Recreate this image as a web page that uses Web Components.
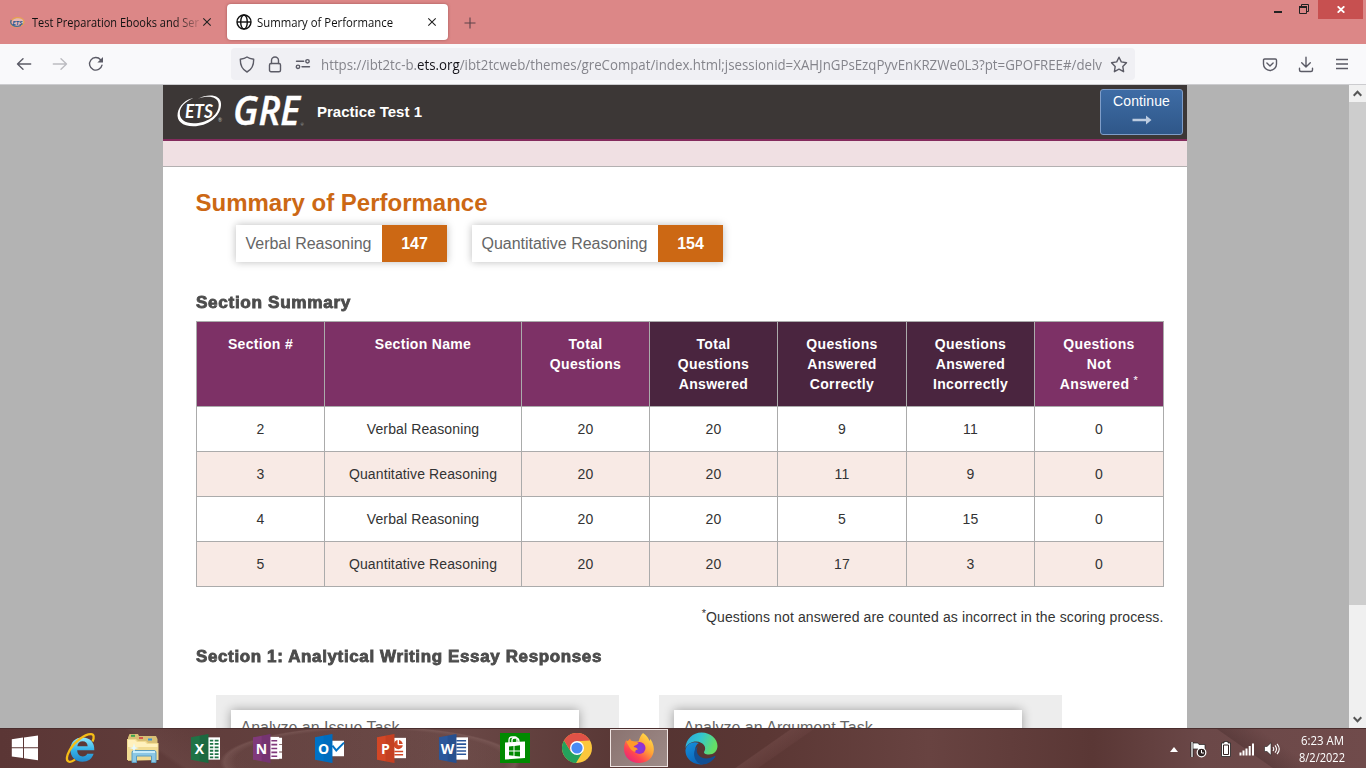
<!DOCTYPE html>
<html lang="en">
<head>
<meta charset="utf-8">
<title>Summary of Performance</title>
<style>
html,body{margin:0;height:100%;overflow:hidden;font-family:"Liberation Sans",Arial,sans-serif}
</style>
</head>
<body>
<desktop-screen></desktop-screen>
<script>
const define=(name,html,setup)=>customElements.define(name,class extends HTMLElement{
  connectedCallback(){
    if(this.shadowRoot)return;
    const t=document.createElement('template');
    t.innerHTML=typeof html==='function'?html(this):html;
    this.attachShadow({mode:'open'}).append(t.content.cloneNode(true));
    if(setup)setup(this,this.shadowRoot);
  }
});

/* Text run set to a given width: mode "space" tracks the letters, otherwise glyphs are scaled. */
define('fit-text','<style>:host{display:inline-block;white-space:nowrap}span{display:inline-block;transform-origin:0 50%}</style><span><slot></slot></span>',(el,r)=>{
  const w=+el.getAttribute('w'),s=r.querySelector('span'),n=s.getBoundingClientRect().width;
  if(!n||!w)return;
  if(el.getAttribute('mode')==='space')s.style.letterSpacing=(w-n)/el.textContent.length+'px';
  else s.style.transform=`scaleX(${w/n})`;
  el.style.width=w+'px';
});

const st='fill="none" stroke="currentColor" stroke-width="1.4" stroke-linecap="round" stroke-linejoin="round"';
const office=(c,d,l,extra)=>`<svg width="31" height="31" viewBox="0 0 32 32">${extra}<path d="M1 4.500 19 1v30L1 27.500z" fill="${c}"/><path d="M10 2.800 19 1v30l-9-1.800z" fill="${d}" opacity=".2"/><text x="9.800" y="21.400" text-anchor="middle" font-family="Open Sans,sans-serif" font-weight="700" font-size="14.500" fill="#fff">${l}</text></svg>`;
const icons={
globe:`<svg width="16" height="16" viewBox="0 0 16 16"><g fill="none" stroke="#111" stroke-width="1.400"><circle cx="8" cy="8" r="7"/><ellipse cx="8" cy="8" rx="3.300" ry="7"/><path d="M1 8h14"/></g></svg>`,
ets:`<svg width="16" height="12" viewBox="0 0 16 12"><ellipse cx="7.300" cy="6.300" rx="6.700" ry="4.600" fill="#e5b7b5" stroke="#e6a24f" stroke-width="1.200" transform="rotate(-10 7 6)"/><path d="M1.300 4C-1 9 5 11.700 11 9.400" fill="none" stroke="#416796" stroke-width="1.300"/><text x="2.500" y="8.800" font-family="Lato" font-size="6.300" font-weight="900" font-style="italic" fill="#24568f" textLength="10">ETS</text></svg>`,
close:`<svg width="10" height="10" viewBox="0 0 10 10"><path d="M1.300 1.300l7.400 7.400M8.700 1.300 1.300 8.700" stroke="#222" stroke-width="1.100"/></svg>`,
plus:`<svg width="12" height="12" viewBox="0 0 12 12"><path d="M.5 6h11M6 .5v11" stroke="#5c4249" stroke-width="1.100"/></svg>`,
back:`<svg width="16" height="16" viewBox="0 0 16 16"><path ${st} d="M14.700 8H1.500M7 2.700 1.500 8 7 13.300"/></svg>`,
forward:`<svg width="16" height="16" viewBox="0 0 16 16"><path ${st} d="M1.300 8h13.200M9 2.700 14.500 8 9 13.300"/></svg>`,
reload:`<svg width="16" height="16" viewBox="0 0 16 16"><path ${st} d="M14 9.200A6.300 6.300 0 1 1 12.600 3.700"/><path d="M15 .9v5.500H9.400z" fill="currentColor"/></svg>`,
shield:`<svg width="16" height="17" viewBox="0 0 16 17"><path ${st} d="M8 1C6 2.500 3.600 3 1.300 3.300 1.200 9 3.300 13.700 8 16c4.700-2.300 6.800-7 6.700-12.700C12.400 3 10 2.500 8 1z"/></svg>`,
lock:`<svg width="14" height="17" viewBox="0 0 14 17"><path ${st} d="M3.500 7.500V4.500a3.500 3.500 0 0 1 7 0v3"/><rect ${st} x="1.500" y="7.500" width="11" height="8.300" rx="1.500"/></svg>`,
perms:`<svg width="16" height="12" viewBox="0 0 16 12"><g ${st}><path d="M1.500 3.300h7.200M7 8.800h7.500"/><circle cx="12.500" cy="3.300" r="1.700"/><circle cx="3" cy="8.800" r="1.700"/></g></svg>`,
star:`<svg width="18" height="17" viewBox="0 0 18 17"><path ${st} d="M9 1.200l2.300 4.700 5.200.8-3.700 3.700.8 5.300L9 13.200l-4.600 2.500.8-5.300L1.500 6.700l5.200-.8z"/></svg>`,
pocket:`<svg width="16" height="14" viewBox="0 0 16 14"><path ${st} d="M2.700 1h10.600q1.200 0 1.200 1.200V6A6.500 6.500 0 0 1 1.500 6V2.200Q1.500 1 2.700 1zM4.900 5 8 7.900 11.100 5"/></svg>`,
download:`<svg width="16" height="17" viewBox="0 0 16 17"><path ${st} d="M8 1.200v9.500M3.700 6.800 8 11l4.300-4.200M1.500 12.300v1.700q0 1.500 1.500 1.500h10q1.500 0 1.500-1.500v-1.700"/></svg>`,
menu:`<svg width="14" height="12" viewBox="0 0 14 12"><path d="M1 1.500h12M1 6h12M1 10.500h12" stroke="#5b5b66" stroke-width="1.300"/></svg>`,
up:`<svg width="9" height="7" viewBox="0 0 9 7"><path d="M.7 5.700 4.500 1.800 8.300 5.700" fill="none" stroke="#555" stroke-width="2"/></svg>`,
down:`<svg width="9" height="7" viewBox="0 0 9 7"><path d="M.7 1.300 4.500 5.200 8.300 1.300" fill="none" stroke="#555" stroke-width="2"/></svg>`,
logo:`<svg width="126" height="44" viewBox="0 0 126 44" style="overflow:visible"><path fill="#fff" fill-rule="evenodd" d="M21 7.700C31 2.500 43.500 3.500 44 12.500 44.600 24 33 34 19 35.200 6.500 36.200-.8 30.500.7 22 2 14.500 9 8.200 16.500 7 7.500 11 3 16 2.800 22 2.600 29 9 33 19 32.200 32 31 42 23.500 41.700 13.500 41.400 5.500 31 4 21 7.700z"/><text x="8" y="26.500" font-family="Lato,sans-serif" font-size="18" font-weight="700" font-style="italic" fill="#fff" textLength="28" lengthAdjust="spacingAndGlyphs">ETS</text><text x="41" y="31" font-family="Lato" font-size="5" fill="#bbb">®</text><text x="56" y="34" font-family="Open Sans,Noto Sans,sans-serif" font-size="39.500" font-weight="600" font-style="italic" fill="#fff" stroke="#fff" stroke-width=".4" textLength="67" lengthAdjust="spacingAndGlyphs">GRE</text><text x="123.500" y="35" font-family="Lato" font-size="4" fill="#bbb">®</text></svg>`,
arrow:`<svg width="20" height="10" viewBox="0 0 20 10"><path d="M.5 3.700h13.500V.5L19.500 5 14 9.500V6.300H.5z" fill="#bdcce0"/></svg>`,
win:`<svg width="28" height="26" viewBox="0 0 28 26"><path fill="#fff" d="M.8 4.200 12 2.600v9.700H.8zM13 2.500 27 .5v11.800H13zM.8 13.300H12v9.800L.8 21.500zM13 13.300h14v12l-14-2z"/></svg>`,
ie:`<svg width="32" height="32" viewBox="0 0 32 32"><defs><linearGradient id="i" x2="0" y2="1"><stop stop-color="#90e7fc"/><stop offset=".5" stop-color="#35b5eb"/><stop offset="1" stop-color="#2488ca"/></linearGradient></defs><path fill="url(#i)" fill-rule="evenodd" d="M29.300 18.300H12.200c.2 4 2.500 6.200 5.500 6.200 2.200 0 3.600-.9 4.500-2.700h6.400c-1.500 5-5.500 8-11.200 8-7.400 0-12-4.900-12-12.200S10.200 5.500 17.400 5.500c8 0 12.300 5.200 11.900 12.800zM12.300 14.300h10.400c-.3-3.200-2.200-5-5.100-5-2.800 0-4.700 1.800-5.300 5z"/><path d="M27.500 9.500C29.500 5 29 2.300 26 2.200 19.500 2 9 10.200 4.500 18.500c-3 5.500-3.500 9.900-1 11 1.500.7 4-.1 6.500-1.900" fill="none" stroke="#f5bd17" stroke-width="2.300"/></svg>`,
folder:`<svg width="34" height="32" viewBox="0 0 34 32"><path d="M2 5.500 3.500 2H12l1 2h17l1.500 3v21L2 29z" fill="#d8bf75"/><path fill="#3ba650" d="M5 2.800h4v2H5z"/><path fill="#d3574b" d="M13 5h4v2h-4z"/><path fill="#3b93d5" d="M22 6.500h4v2h-4z"/><path d="M1 7h9l2 2h8l2 2h10.500v17H1z" fill="#f2dc93"/><path d="M2 8h7l2 2h8l2 2h10.500v3H2z" fill="#fff1bd"/><path d="M6 30.500V20.500q0-2 2-2h20q2 0 2 2v10h-4.500V24h-15v6.500z" fill="#8bc7e5" stroke="#5b9dbf"/><path d="M7 19h22v2H7z" fill="#c9edf9"/><path d="m8 11 1 4 4 1-4 1-1 4-1-4-4-1 4-1z" fill="#e7faff"/></svg>`,
excel:office('#207346','#103f27','X','<path fill="#fff" d="M18 4.500h13v23H18z"/><path d="M20.500 7.800h3.500M20.500 11.300h3.500M20.500 14.800h3.500M20.500 18.300h3.500M20.500 21.800h3.500M20.500 25.200h3.500M25.500 7.800h4M25.500 11.300h4M25.500 14.800h4M25.500 18.300h4M25.500 21.800h4M25.500 25.200h4" stroke="#207346" stroke-width="1.900"/>'),
onenote:office('#80397b','#4d224b','N','<path fill="#fff" d="M18 4h10v23H18z"/><path d="M20 8h6M20 12h6M20 16h6M20 20h6M20 24h6" stroke="#80397b" stroke-width="1.700"/><path d="M27.500 5h3.500v6.500h-3.500zM27.500 12.500h3.500v6.500h-3.500zM27.500 20h3.500v6.500h-3.500z" fill="#fff"/>'),
outlook:office('#0072c6','#0057a0','O','<path fill="#fff" d="M18 8h13v16H18z"/><path d="m19 13 4 5 8-8" stroke="#0072c6" stroke-width="2" fill="none"/>'),
ppt:office('#d24726','#8d2a14','P','<path fill="#fff" d="M18 5h13v21H18z"/><circle cx="23" cy="12" r="4.700" fill="#d24726"/><path d="M23 12V6.500M23 12h5" stroke="#fff" stroke-width="1.500"/><path d="M19 19h9M19 22.500h9" stroke="#d24726" stroke-width="1.600"/>'),
word:office('#2b579a','#173564','W','<path fill="#fff" d="M18 4.500h13v23H18z"/><path d="M19 8h10M19 11.500h10M19 15h10M19 18.500h10M19 22h10" stroke="#2b579a" stroke-width="1.600"/>'),
store:`<svg width="30" height="30" viewBox="0 0 30 30"><path fill="#008a00" d="M0 0h30v30H0z"/><path d="M9 10V7q0-3 3-3h3q2 0 2 3v2M12 9V7q0-2 3-2h1q3 0 3 4" stroke="#fff" stroke-width="1.300" fill="none"/><path d="m5 9.500 20-1v16.500L5 26.500z" fill="#fff"/><path d="m7.500 13.500 4.500-.5v4.500H7.500zM13 12.900l5.500-.6v5.200H13zM7.500 18.500H12v4.300l-4.500-.5zM13 18.500h5.500v5L13 22.900z" fill="#008a00" transform="translate(1.500)"/></svg>`,
chrome:`<svg width="30" height="30" viewBox="0 0 30 30"><circle cx="15" cy="15" r="15" fill="#fbc73c"/><path d="M2 7.500A15 15 0 0 0 14 30l7.300-12L15 21.500 8.500 18z" fill="#24a25c"/><path d="M2 7.500A15 15 0 0 1 28 7.500L15 8.200 8.500 18z" fill="#df5247"/><circle cx="15" cy="15" r="7" fill="#fff"/><circle cx="15" cy="15" r="5.600" fill="#4a8af4"/></svg>`,
firefox:`<svg width="32" height="32" viewBox="0 0 32 32"><defs><linearGradient id="f" x1="1" y1="0" x2=".2" y2="1"><stop stop-color="#fff04f"/><stop offset=".45" stop-color="#ffa436"/><stop offset=".75" stop-color="#ff4550"/><stop offset="1" stop-color="#e42480"/></linearGradient><radialGradient id="g"><stop stop-color="#7542e5"/><stop offset="1" stop-color="#a12ac6"/></radialGradient></defs><path fill="url(#f)" d="M20 1c4 3 5.500 5 6.500 8l1-2c3 5 4 9 3 13.500C29 27 23 31 16 31 7.500 31 1 25 1 17c0-4 1-7 2.500-9.500V11l3.500-4.500L8.500 10c3-.5 5-.5 7-.5C17 5 18 3 20 1z"/><circle cx="16.500" cy="16" r="6" fill="url(#g)"/><path d="M3 9.500c5-2.500 8.500 1 12.500 1.500-1 2-4.500 2.500-5 4 2 0 3.500 1 4.500 2.500-1.500-.3-3 .7-2.500 2.200C8 20 5.500 13 3 9.500z" fill="#ff9a2a"/></svg>`,
edge:`<svg width="33" height="33" viewBox="0 0 33 33"><defs><linearGradient id="e" y2=".3"><stop stop-color="#2ba6df"/><stop offset=".5" stop-color="#33c6cf"/><stop offset="1" stop-color="#65df65"/></linearGradient><linearGradient id="d" x2=".5" y2="1"><stop stop-color="#1490dc"/><stop offset="1" stop-color="#0b64b8"/></linearGradient></defs><path d="M.5 16C.8 7 8 .5 16.500.5 26 .5 32.500 7 32.500 14c0 5-4 8.500-8.500 8.500-4 0-6-1.500-4.500-3.500 1.500-2.500.5-6-3-8C11 8 3.500 10 .5 16z" fill="url(#e)"/><path d="M.5 18C1.500 11.500 8 8.800 14 11c-3 1.500-4.500 5-3.500 9 1.500 6 6.500 9 12 9.500-2.500 2-4 3-6.500 3C7 32.500 0 26 .5 18z" fill="url(#d)"/><path d="M13 14c-3.500 6 1 12.500 8 12.500 3 0 6-1 8.500-2.500.7-.3 1.200.2.800.9C27 30 22 32.500 17 32.500 9 31 6 19 13 14z" fill="#124f93"/></svg>`,
tri:`<svg width="8" height="5" viewBox="0 0 8 5"><path d="M0 5 4 0l4 5z" fill="#fff"/></svg>`,
flag:`<svg width="17" height="17" viewBox="0 0 17 17"><path d="M2 1v15" stroke="#222" stroke-width="3"/><path d="M3 2h5l1 1.500h6v6H9L8 8H3z" fill="#fff" stroke="#222" stroke-width=".7"/><path d="M2 1v15" stroke="#fff" stroke-width="1.300"/><circle cx="11.500" cy="11.500" r="4.300" fill="#2c2222" stroke="#fff" stroke-width="1.200"/><path d="M11.500 9v3h2.500" stroke="#fff" fill="none"/></svg>`,
battery:`<svg width="10" height="16" viewBox="0 0 10 16"><path d="M3 .5h4V2h2.500v13.500H.5V2H3z" fill="#fff" stroke="#222" stroke-width=".8"/><path d="M2.500 4h5v9.500h-5z" fill="#fff" stroke="#332222"/></svg>`,
signal:`<svg width="16" height="13" viewBox="0 0 16 13"><path fill="#fff" d="M.5 9.500h2v3h-2zM3.500 7.500h2v5h-2zM6.500 5.500h2v7h-2zM9.700 3h2v9.500h-2zM13 .5h2v12h-2z"/></svg>`,
sound:`<svg width="16" height="14" viewBox="0 0 16 14"><path d="M.5 4.500H3L7 .7v12.600L3 9.500H.5z" fill="#fff" stroke="#222" stroke-width=".6"/><path d="M9 5q1.500 2 0 4M11 3.300q3 3.700 0 7.400M13 1.800q4.500 5.200 0 10.400" fill="none" stroke="#fff" stroke-width="1.100"/></svg>`
};
define('ui-icon',el=>`<style>:host{display:block;flex:none;line-height:0}svg{display:block}</style>${icons[el.getAttribute('name')]}`);

define('browser-tabs',`<style>
:host{display:flex;height:44px;background:#dc8787;font:12.5px "Open Sans","Noto Sans",sans-serif;color:#111}
.tab{display:flex;align-items:center;height:36px;margin-top:4px}
.idle{width:217px;padding-left:10px;box-sizing:border-box}.idle fit-text{margin-left:6px}
.idle .t{-webkit-mask:linear-gradient(90deg,#000 148px,transparent 178px);margin-right:3px}
.on{width:221px;margin-left:10px;box-sizing:border-box;padding-left:9px;background:#fff;border-radius:4px;box-shadow:0 0 3px #7b373799}
.on fit-text{margin:0 34px 0 5px}
.add{margin:17px 0 0 16px}
.win{margin-left:auto;display:flex}
.min{width:8px;height:2px;background:#222;margin-top:11px}.box{margin:4px 9px 0 17px}
.x{width:45px;height:19px;background:#c75050;display:flex;align-items:center;justify-content:center;margin-right:3px}
</style>
<div class="tab idle"><ui-icon name="ets"></ui-icon><span class="t"><fit-text w="167">Test Preparation Ebooks and Ser</fit-text></span><ui-icon name="close"></ui-icon></div>
<div class="tab on"><ui-icon name="globe"></ui-icon><fit-text w="136">Summary of Performance</fit-text><ui-icon name="close"></ui-icon></div>
<ui-icon class="add" name="plus"></ui-icon>
<div class="win"><div class="min"></div><svg class="box" width="10" height="10"><path d="M.5 2.500h7v7h-7zM2.500 2.500v-2h7v7h-2" fill="none" stroke="#222"/><path d="M0 3h8" stroke="#222" stroke-width="2"/></svg><div class="x"><svg width="8" height="7"><path d="M.7.300 7.300 6.700M7.300.300.7 6.700" stroke="#fff" stroke-width="1.800"/></svg></div></div>`);

define('browser-toolbar',`<style>
:host{display:flex;align-items:center;height:40px;box-sizing:content-box;background:#f9f9fb;border-bottom:1px solid #cccccf;color:#5b5b66;font:14px "Open Sans","Noto Sans",sans-serif}
.back{margin-left:16px}.fwd{margin-left:20px;color:#bcbcc1}.re{margin-left:20px}
.url{display:flex;align-items:center;height:32px;width:904px;margin-left:127px;background:#f0f0f4;border-radius:4px;box-sizing:border-box;padding-left:8px}
.lock{margin-left:13px}.perm{margin:0 10px 0 13px}.url fit-text{color:#84848b}b{font-weight:400;color:#15141a}.star{margin-left:8px}
.p{margin:1px 0 0 127px}.d{margin-left:20px}.m{margin-left:21px}
</style>
<ui-icon class="back" name="back"></ui-icon><ui-icon class="fwd" name="forward"></ui-icon><ui-icon class="re" name="reload"></ui-icon>
<div class="url"><ui-icon name="shield"></ui-icon><ui-icon class="lock" name="lock"></ui-icon><ui-icon class="perm" name="perms"></ui-icon><fit-text w="781">https://ibt2tc-b.<b>ets.org</b>/ibt2tcweb/themes/greCompat/index.html;jsessionid=XAHJnGPsEzqPyvEnKRZWe0L3?pt=GPOFREE#/delv</fit-text><ui-icon class="star" name="star"></ui-icon></div>
<ui-icon class="p" name="pocket"></ui-icon><ui-icon class="d" name="download"></ui-icon><ui-icon class="m" name="menu"></ui-icon>`);

define('test-header',`<style>
:host{display:block}
.bar{display:flex;height:54px;background:#3c3736;border-bottom:2px solid #842b5d;color:#fff}
.logo{margin:6px 0 0 14px}
.title{font:bold 15px/20px "Liberation Sans",sans-serif;margin:17px 0 0 14px}
button{margin:4px 4px 0 auto;width:83px;height:46px;box-sizing:border-box;padding:1px 0 0;border:1px solid #7f9dc8;border-radius:3px;background:linear-gradient(#3e6ca5,#2f5789);color:#fff;font:14px/20px "Liberation Sans",sans-serif;display:flex;flex-direction:column;align-items:center}
button ui-icon{margin-top:4px}
.strip{height:25px;background:#f0e0e3;border-bottom:1px solid #b3b0b1}
</style>
<div class="bar"><ui-icon class="logo" name="logo"></ui-icon><div class="title"><fit-text w="105" mode="space">Practice Test 1</fit-text></div><button><fit-text w="57" mode="space">Continue</fit-text><ui-icon name="arrow"></ui-icon></button></div><div class="strip"></div>`);

define('score-chip',el=>`<style>
:host{display:flex;height:37px;background:#fff;box-shadow:0 0 8px #0004;font:16px/37px "Liberation Sans",sans-serif;color:#666}
.l{padding-left:9.500px;box-sizing:border-box;width:${el.getAttribute('label-width')}px}
.v{width:65px;background:#cc6814;color:#fff;font-weight:bold;text-align:center}
</style><div class="l"><slot></slot></div><div class="v">${el.getAttribute('score')}</div>`);

define('section-heading',`<style>:host{display:block;height:24px;box-sizing:border-box;padding-top:1px;letter-spacing:.6px;font:bold 16px/23px "Liberation Sans",sans-serif;color:#4c4c4c;-webkit-text-stroke:.8px #4c4c4c}</style><slot></slot>`);

const heads=[['Section #'],['Section Name'],['Total','Questions'],['Total','Questions','Answered'],['Questions','Answered','Correctly'],['Questions','Answered','Incorrectly'],['Questions','Not','Answered <sup>*</sup>']];
const rows=[[2,'Verbal Reasoning',20,20,9,11,0],[3,'Quantitative Reasoning',20,20,11,9,0],[4,'Verbal Reasoning',20,20,5,15,0],[5,'Quantitative Reasoning',20,20,17,3,0]];
define('summary-table',()=>`<style>
:host{display:grid;width:966px;grid-template-columns:127px 196px 127px 127px 128px 127px 128px;grid-template-rows:84px repeat(4,44px);gap:1px;background:#ababab;border:1px solid #ababab;font:14px/20px "Liberation Sans",sans-serif;color:#333;text-align:center}
.h{background:#7d3166;color:#fff;font-weight:bold;padding-top:12px;letter-spacing:.32px}
.k{background:#4a253f}
.c{background:#fff;line-height:44px;letter-spacing:.12px}.o{background:#f8eae5}
sup{font-size:11px;line-height:0;font-weight:400;vertical-align:5px}
</style>${heads.map((h,i)=>`<div class="h ${i>2&&i<6?'k':''}">${h.join('<br>')}</div>`).join('')}${rows.map((r,i)=>r.map(c=>`<div class="c ${i%2?'o':''}">${c}</div>`).join('')).join('')}`);

define('essay-panel',`<style>
:host{display:block;box-sizing:border-box;width:403px;height:120px;background:#ededed;padding:15px}
div{width:348px;height:60px;background:#fff;box-shadow:0 0 10px #0005;font:16px/36px "Liberation Sans",sans-serif;color:#666;padding-left:9.500px;box-sizing:border-box}
</style><div><slot></slot></div>`);

define('page-view',`<style>
:host{display:flex;height:643px;overflow:hidden;background:#b3b3b3}
main{width:1024px;margin-left:163px;background:#fff;overflow:hidden}
.body{padding:22px 0 0 33px}
h1{margin:0 0 0 -.5px;font:bold 24px/28px "Liberation Sans",sans-serif;color:#cc6814}
.chips{display:flex;gap:25px;margin:8px 0 28px 40px}
summary-table{margin-top:7px}
.note{width:967.500px;text-align:right;font:14px/20px "Liberation Sans",sans-serif;color:#333;margin:20px 0 17px}
sup{font-size:11px;line-height:0;vertical-align:5px}
.essays{display:flex;gap:40px;margin:27px 0 0 20px}
.scroll{margin-left:auto;width:17px;background:#f0f0f0;display:flex;flex-direction:column;align-items:center}
.thumb{width:100%;height:503px;background:#cdcdcd;margin-top:5px}
.scroll .u{margin-top:5px}.scroll .d{margin:auto 0 5px}
</style>
<main><test-header></test-header><div class="body"><h1><fit-text w="292" mode="space">Summary of Performance</fit-text></h1>
<div class="chips"><score-chip score="147" label-width="146"><fit-text w="126" mode="space">Verbal Reasoning</fit-text></score-chip><score-chip score="154" label-width="186"><fit-text w="166" mode="space">Quantitative Reasoning</fit-text></score-chip></div>
<section-heading><fit-text w="155">Section Summary</fit-text></section-heading>
<summary-table></summary-table>
<div class="note"><sup>*</sup><fit-text w="457.500" mode="space">Questions not answered are counted as incorrect in the scoring process.</fit-text></div>
<section-heading><fit-text w="406">Section 1: Analytical Writing Essay Responses</fit-text></section-heading>
<div class="essays"><essay-panel>Analyze an Issue Task</essay-panel><essay-panel>Analyze an Argument Task</essay-panel></div>
</div></main>
<div class="scroll"><ui-icon class="u" name="up"></ui-icon><div class="thumb"></div><ui-icon class="d" name="down"></ui-icon></div>`);

define('task-bar',()=>`<style>
:host{display:flex;height:40px;color:#fff;box-shadow:inset 0 1px #4a2e2e;background:
linear-gradient(35deg,transparent 46px,#7d5a5740 50px,transparent 90px) 100px 0/170px 40px no-repeat,
radial-gradient(ellipse 150px 36px at 370px 34px,#80615c22 90%,#a3827d44 97%,transparent 100%),
linear-gradient(145deg,transparent 49%,#8b605e44 50%,#7b504f33 60%,transparent 61%) 690px 0/150px 40px no-repeat,
linear-gradient(35deg,transparent 49%,#4b303077 50%,transparent 75%) 1190px 0/110px 40px no-repeat,
linear-gradient(90deg,#5b3635,#644240 25%,#694745 34%,#553432 48%,#5b3734 56%,#684341 68%,#5a3735 80%,#6b4848 88%,#704b4b)}
.i{width:62px;display:flex;align-items:center;justify-content:center}.w{width:50px}
.a{width:58px;margin:1px 2px 0;height:38px;box-sizing:border-box;border:1px solid #efe4e2;background:linear-gradient(135deg,#8a7370,#9e8b88)}
.tray{margin-left:auto;display:flex;align-items:center;padding-top:2px}
.clock{font:12px/17px "Open Sans","Noto Sans",sans-serif;width:60px;margin:0 14px 0 12px;text-align:center}
</style>
<div class="i w"><ui-icon name="win"></ui-icon></div>${['ie','folder','excel','onenote','outlook','ppt','word','store','chrome','firefox','edge'].map(n=>`<div class="i ${n==='firefox'?'a':''}"><ui-icon name="${n}"></ui-icon></div>`).join('')}
<div class="tray"><ui-icon name="tri"></ui-icon><ui-icon name="flag" style="margin-left:12px"></ui-icon><ui-icon name="battery" style="margin-left:14px"></ui-icon><ui-icon name="signal" style="margin-left:8px"></ui-icon><ui-icon name="sound" style="margin-left:9px"></ui-icon><div class="clock"><fit-text w="43">6:23 AM</fit-text><br><fit-text w="46">8/2/2022</fit-text></div></div>`);

define('desktop-screen',`<style>:host{display:flex;flex-direction:column;width:1366px;height:768px;overflow:hidden}</style>
<browser-tabs></browser-tabs><browser-toolbar></browser-toolbar><page-view></page-view><task-bar></task-bar>`);
</script>
</body>
</html>
